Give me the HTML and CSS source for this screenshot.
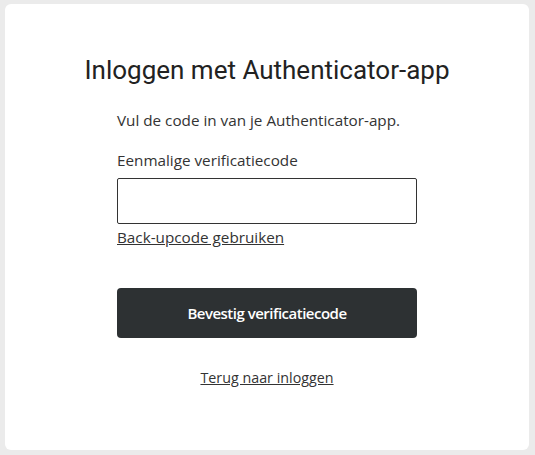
FILE: index.html
```html
<!DOCTYPE html>
<html lang="nl">
<head>
<meta charset="utf-8">
<link rel="stylesheet" href="styles.css">
</head>
<body>
<main class="card">
  <h1 class="title">Inloggen met Authenticator-app</h1>
  <div class="form">
    <p class="intro">Vul de code in van je Authenticator-app.</p>
    <label class="label" for="code">Eenmalige verificatiecode</label>
    <input class="input" id="code" type="text">
    <a class="link" href="#">Back-upcode gebruiken</a>
    <button class="button" type="button">Bevestig verificatiecode</button>
    <a class="link back" href="#">Terug naar inloggen</a>
  </div>
</main>
</body>
</html>
```

FILE: styles.css
```css
html, body {
  margin: 0;
  padding: 0;
  background: #ebebeb;
}
body {
  padding: 4px 6px 5px 5px;
  font-family: "Open Sans", sans-serif;
  color: #333;
}
.card {
  background: #fff;
  border-radius: 6px;
  height: 446px;
  box-sizing: border-box;
  padding-top: 50px;
  display: flex;
  flex-direction: column;
  align-items: center;
}
.title {
  font-family: Roboto, sans-serif;
  font-weight: 400;
  font-size: 26px;
  line-height: 32px;
  margin: 0;
  color: #222;
}
.form {
  width: 300px;
  display: flex;
  flex-direction: column;
  margin-top: 23px;
}
.intro {
  margin: 0;
  font-size: 15.25px;
  line-height: 22px;
}
.label {
  margin-top: 18px;
  font-size: 15.25px;
  line-height: 22px;
}
.input {
  margin-top: 7px;
  height: 46px;
  box-sizing: border-box;
  border: 1px solid #333;
  border-radius: 2px;
  padding: 0 10px;
  font: inherit;
}
.link {
  color: #333;
  font-size: 15.25px;
  line-height: 22px;
  text-decoration: underline;
  align-self: flex-start;
}
.input + .link {
  margin-top: 2px;
}
.button {
  margin-top: 40px;
  height: 50px;
  border: 0;
  border-radius: 4px;
  background: #2d3133;
  color: #fff;
  font-family: inherit;
  font-size: 15px;
  font-weight: 600;
  letter-spacing: -0.5px;
}
.back {
  align-self: center;
  margin-top: 29px;
  font-size: 14.3px;
}
```
